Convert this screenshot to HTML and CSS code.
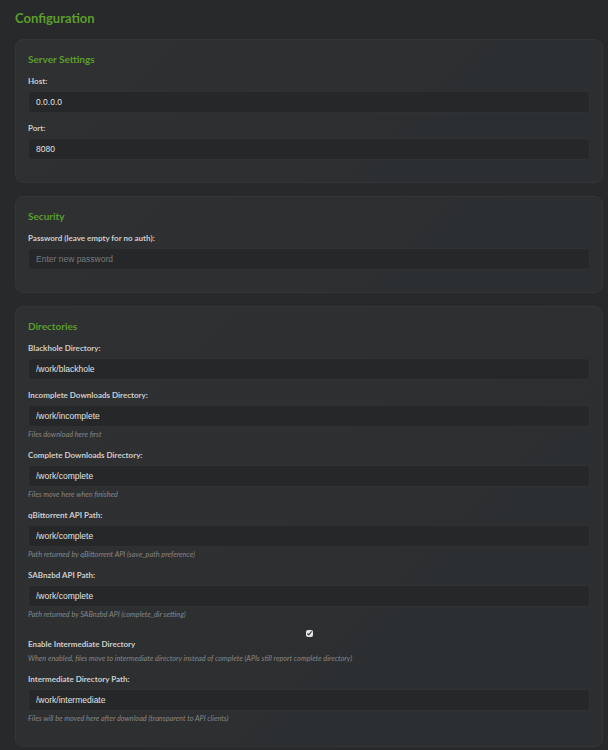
FILE: index.html
```html
<!DOCTYPE html>
<html lang="en">
<head>
  <meta charset="UTF-8" />
  <meta name="viewport" content="width=device-width, initial-scale=1.0"/>
  <title>Configuration</title>
  <link rel="stylesheet" href="styles.css">
</head>
<body>
<h1 class="title">Configuration</h1>

<div class="card">
  <h2>Server Settings</h2>
  <div class="group">
    <label for="host">Host:</label>
    <input class="input" id="host" value="0.0.0.0">
  </div>
  <div class="group">
    <label for="port">Port:</label>
    <input class="input" id="port" value="8080">
  </div>
</div>

<div class="card">
  <h2>Security</h2>
  <div class="group">
    <label for="password">Password (leave empty for no auth):</label>
    <input class="input" id="password" type="password" placeholder="Enter new password">
  </div>
</div>

<div class="card">
  <h2>Directories</h2>
  <div class="group">
    <label for="blackhole">Blackhole Directory:</label>
    <input class="input" id="blackhole" value="/work/blackhole">
  </div>
  <div class="group">
    <label for="incomplete">Incomplete Downloads Directory:</label>
    <input class="input" id="incomplete" value="/work/incomplete">
    <div class="help">Files download here first</div>
  </div>
  <div class="group">
    <label for="complete">Complete Downloads Directory:</label>
    <input class="input" id="complete" value="/work/complete">
    <div class="help">Files move here when finished</div>
  </div>
  <div class="group">
    <label for="qbt">qBittorrent API Path:</label>
    <input class="input" id="qbt" value="/work/complete">
    <div class="help">Path returned by qBittorrent API (save_path preference)</div>
  </div>
  <div class="group">
    <label for="sab">SABnzbd API Path:</label>
    <input class="input" id="sab" value="/work/complete">
    <div class="help">Path returned by SABnzbd API (complete_dir setting)</div>
  </div>
  <div class="group">
    <label class="check-label">
      <input type="checkbox" class="check" checked>
      Enable Intermediate Directory
    </label>
    <div class="help help-check">When enabled, files move to intermediate directory instead of complete (APIs still report complete directory)</div>
  </div>
  <div class="group">
    <label for="intermediate">Intermediate Directory Path:</label>
    <input class="input" id="intermediate" value="/work/intermediate">
    <div class="help">Files will be moved here after download (transparent to API clients)</div>
  </div>
</div>
</body>
</html>
```

FILE: styles.css
```css
* { box-sizing: border-box; }
html, body { margin: 0; padding: 0; background: #27292b; }
body { padding: 10px 5px 20px 15px; font-family: Lato, "Noto Sans", sans-serif; color: #cfcfcf; }

.title { margin: 0 0 13px; font-size: 13px; line-height: 16px; font-weight: 700; color: #5b9e2c; }

.card {
  margin-bottom: 13px; padding: 12px; border: 1px solid #333538; border-radius: 8px;
  background: linear-gradient(135deg, #2f3032 0%, #2d2f31 50%, #2b2f32 100%);
}
.card h2 { margin: 0 0 10px; font-size: 10px; line-height: 14px; font-weight: 700; color: #5b9e2c; }

.group { margin-bottom: 10px; }
.group label { display: block; margin-bottom: 5px; font-size: 8px; line-height: 10px; font-weight: 700; color: #cdcdcd; }

.input {
  display: block; width: 100%; height: 22px; padding: 0 7px;
  border: 1px solid #2f3133; border-radius: 4px; background: #252729;
  color: #e2e2e2; font-family: "Liberation Sans", Arial, sans-serif; font-size: 8.5px;
  outline: none;
}
.input::placeholder { color: #7a7a7a; }

.help { margin-top: 3px; font-size: 7.3px; line-height: 10px; font-style: italic; color: #868686; }
.help-check { margin-top: 0; }

.check-label .check {
  display: block; width: 7px; height: 7px; margin: 0 auto 2px; accent-color: #e4e4e4;
}
```
